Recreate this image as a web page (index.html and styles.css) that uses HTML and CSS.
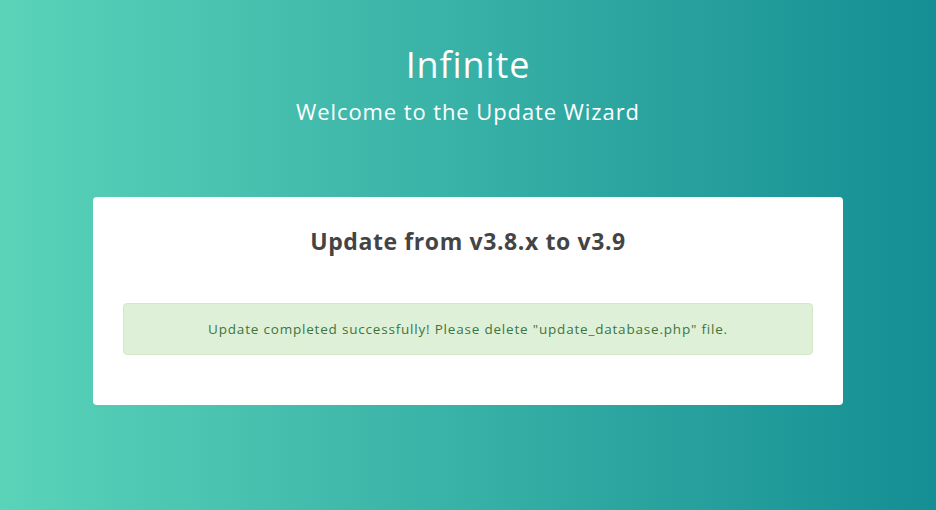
FILE: index.html
```html
<!DOCTYPE html>
<html lang="en">
<head>
<meta charset="utf-8">
<title>Infinite - Update Wizard</title>
<link rel="stylesheet" href="styles.css">
</head>
<body>
<div class="page">
  <header class="hero">
    <h1 class="brand">Infinite</h1>
    <p class="subtitle">Welcome to the Update Wizard</p>
  </header>
  <main class="card">
    <h2 class="card-title">Update from v3.8.x to v3.9</h2>
    <div class="alert-success">Update completed successfully! Please delete "update_database.php" file.</div>
  </main>
</div>
</body>
</html>
```
FILE: styles.css
```css
html, body {
  margin: 0;
  padding: 0;
  height: 100%;
}
body {
  font-family: "Open Sans", "Noto Sans", sans-serif;
  background: linear-gradient(to right, #5ad3b9 0%, #158e94 100%);
  color: #444;
}
.page {
  display: flex;
  flex-direction: column;
  align-items: center;
  min-height: 100%;
}
.hero {
  text-align: center;
  color: #fff;
  padding-top: 40px;
}
.brand {
  margin: 0;
  font-size: 36px;
  font-weight: 400;
  line-height: 50px;
  letter-spacing: 0.9px;
}
.subtitle {
  margin: 0;
  margin-top: 6px;
  font-size: 22px;
  line-height: 30px;
  font-weight: 400;
  letter-spacing: 0.9px;
}
.card {
  margin-top: 71px;
  width: 690px;
  padding: 30px;
  background: #fff;
  border-radius: 4px;
}
.card-title {
  margin: 0 0 48px;
  text-align: center;
  font-size: 23px;
  font-weight: 700;
  line-height: 28px;
  color: #444;
  letter-spacing: 0.6px;
}
.alert-success {
  padding: 15px;
  margin-bottom: 20px;
  background: #dff0d8;
  border: 1px solid #d0e9c6;
  border-radius: 4px;
  color: #3c763d;
  font-size: 13.5px;
  font-weight: 500;
  line-height: 20px;
  text-align: center;
  letter-spacing: 0.8px;
}
```
